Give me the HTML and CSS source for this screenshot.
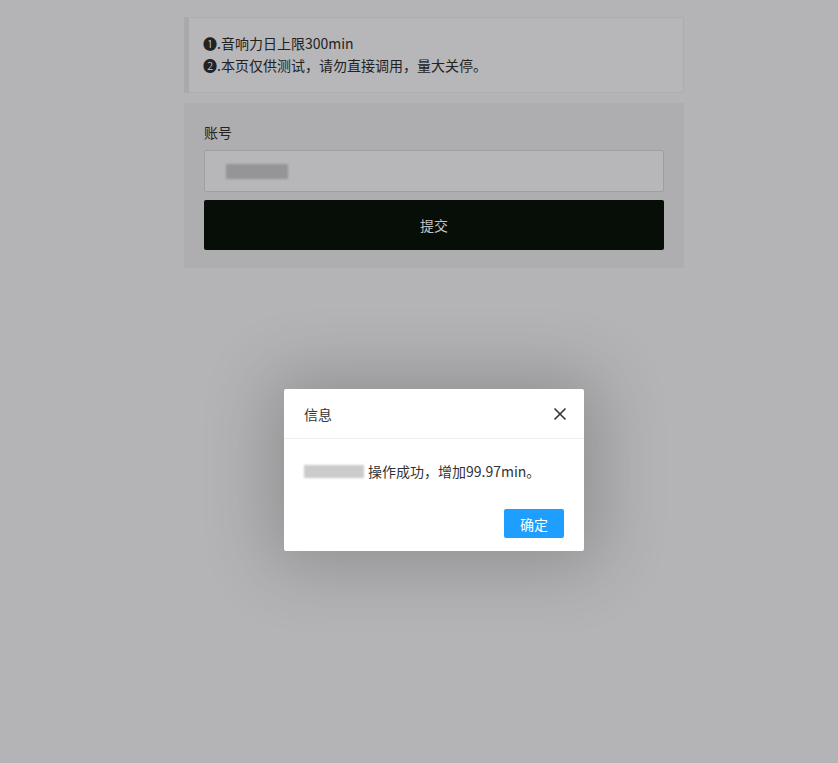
FILE: index.html
```html
<!DOCTYPE html>
<html lang="zh-CN">
<head>
<meta charset="utf-8">
<title>提交</title>
<link rel="stylesheet" href="styles.css">
</head>
<body>
<div class="wrap">
  <blockquote class="notice">
    <p>❶.音响力日上限300min</p>
    <p>❷.本页仅供测试，请勿直接调用，量大关停。</p>
  </blockquote>
  <form class="card">
    <label class="label">账号</label>
    <div class="input"><span class="redact"></span></div>
    <button type="button" class="submit">提交</button>
  </form>
</div>

<div class="dialog">
  <div class="dlg-title">
    <span>信息</span>
    <svg class="close" width="14" height="14" viewBox="0 0 14 14"><path d="M1.5 1.5 L12.5 12.5 M12.5 1.5 L1.5 12.5" stroke="#333" stroke-width="1.6" fill="none"/></svg>
  </div>
  <div class="dlg-body"><span class="redact-light"></span> 操作成功，增加99.97min。</div>
  <div class="dlg-foot"><button type="button" class="ok">确定</button></div>
</div>
</body>
</html>
```

FILE: styles.css
```css
html, body {
  margin: 0;
  padding: 0;
}
body {
  background: #b4b3b5;
  font-family: "Noto Sans CJK SC", "DejaVu Sans", sans-serif;
  font-size: 14px;
  color: #1c1c1c;
  min-height: 763px;
}
.wrap {
  width: 500px;
  padding: 17px 0 0 184px;
}
.notice {
  margin: 0;
  background: #b7b6b8;
  border: 1px solid #adacae;
  border-left: 5px solid #a9a8aa;
  padding: 14px 14px 15px 14px;
  height: 45px;
}
.notice p {
  margin: 0;
  line-height: 22px;
  font-size: 14px;
  color: #222;
}
.card {
  margin-top: 10px;
  background: #aeadaf;
  padding: 19px 20px 18px 20px;
  display: flex;
  flex-direction: column;
}
.label {
  line-height: 20px;
  color: #232323;
  margin-bottom: 8px;
}
.input {
  height: 40px;
  border: 1px solid #9f9ea0;
  background: #b7b6b8;
  border-radius: 2px;
  display: flex;
  align-items: center;
  padding-left: 21px;
}
.redact {
  width: 62px;
  height: 15px;
  background: #959496;
  filter: blur(1px);
}
.submit {
  margin-top: 8px;
  height: 50px;
  border: none;
  border-radius: 2px;
  background: #070e07;
  color: #c4c4c4;
  font-family: inherit;
  font-size: 14px;
}
.dialog {
  position: absolute;
  left: 284px;
  top: 389px;
  width: 300px;
  height: 162px;
  background: #fff;
  border-radius: 2px;
  box-shadow: 1px 1px 70px 14px rgba(0, 0, 0, 0.2);
  display: flex;
  flex-direction: column;
  color: #333;
}
.dlg-title {
  height: 49px;
  border-bottom: 1px solid #f0f0f0;
  display: flex;
  align-items: center;
  justify-content: space-between;
  padding: 0 17px 0 20px;
  font-size: 14px;
}
.close {
  display: block;
}
.dlg-body {
  padding: 22px 20px 0 20px;
  line-height: 20px;
  font-size: 14px;
  display: flex;
  align-items: center;
  gap: 4px;
  color: #333;
}
.redact-light {
  display: inline-block;
  width: 60px;
  height: 13px;
  background: #cbcbcb;
  filter: blur(0.8px);
}
.dlg-foot {
  display: flex;
  justify-content: flex-end;
  padding: 28px 20px 0 20px;
}
.ok {
  width: 60px;
  height: 29px;
  border: none;
  border-radius: 2px;
  background: #1e9fff;
  color: #fff;
  font-family: inherit;
  font-size: 14px;
  padding: 0;
}
```
